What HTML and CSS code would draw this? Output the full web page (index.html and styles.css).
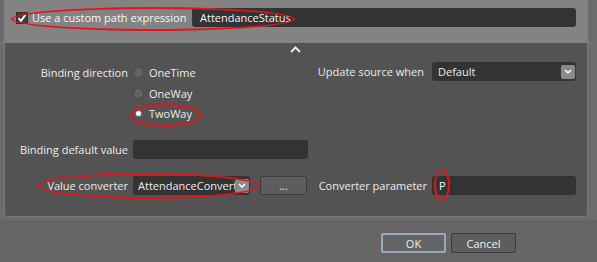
FILE: index.html
```html
<!DOCTYPE html>
<html lang="en">

<head>
    <meta charset="UTF-8">
    <link rel="stylesheet" href="styles.css">
    <title>Create Data Binding</title>
</head>

<body>
    <section class="dialog">
        <div class="frame">
            <div class="main">
                <!-- custom path row -->
                <div class="header">
                    <label class="check">
                        <span class="box">
                            <svg width="10" height="10" viewBox="0 0 10 10">
                                <path d="M1.5 5.2 L4 7.8 L8.6 1.6" fill="none" stroke="#fff" stroke-width="1.8"/>
                            </svg>
                        </span>
                        Use a custom path expression
                    </label>
                    <div class="field path">AttendanceStatus</div>
                </div>

                <div class="panel">
                    <div class="collapse">
                        <svg width="11" height="7" viewBox="0 0 11 7">
                            <path d="M1 6 L5.5 1.5 L10 6" fill="none" stroke="#e6e6e6" stroke-width="2"/>
                        </svg>
                    </div>

                    <div class="grid">
                        <div class="label top">Binding direction</div>
                        <div class="radios">
                            <div class="radio"><span class="dot"></span>OneTime</div>
                            <div class="radio"><span class="dot"></span>OneWay</div>
                            <div class="radio"><span class="dot on"></span>TwoWay</div>
                        </div>
                        <div class="label top first">Update source when</div>
                        <div class="select top">
                            <span class="value">Default</span>
                            <span class="arrow">
                                <svg width="8" height="5" viewBox="0 0 8 5"><path d="M1 1 L4 4 L7 1" fill="none" stroke="#fff" stroke-width="1.5"/></svg>
                            </span>
                        </div>

                        <div class="label">Binding default value</div>
                        <div class="field"></div>
                        <div></div>
                        <div></div>

                        <div class="label">Value converter</div>
                        <div class="pair">
                            <div class="select conv">
                                <span class="value">AttendanceConvert</span>
                                <span class="arrow">
                                    <svg width="8" height="5" viewBox="0 0 8 5"><path d="M1 1 L4 4 L7 1" fill="none" stroke="#fff" stroke-width="1.5"/></svg>
                                </span>
                            </div>
                            <div class="btn small">...</div>
                        </div>
                        <div class="label">Converter parameter</div>
                        <div class="field">P</div>
                    </div>
                </div>
            </div>
            <div class="side"></div>
        </div>

        <div class="footer">
            <div class="btn ok">OK</div>
            <div class="btn">Cancel</div>
        </div>

        <!-- red highlight marks -->
        <div class="mark m-path"></div>
        <div class="mark m-two"></div>
        <div class="mark m-conv"></div>
        <div class="mark m-param"></div>
    </section>
</body>

</html>
```

FILE: styles.css
```css
* {
    box-sizing: border-box;
    font-family: 'Open Sans', 'Liberation Sans', sans-serif;
}

body {
    margin: 0;
    background-color: #666666;
}

.dialog {
    position: relative;
    width: 597px;
    height: 262px;
    font-size: 11px;
    color: #ececec;
}

.frame {
    display: flex;
    height: 220px;
    background-color: #6c6c6c;
}

.main {
    width: 584px;
    margin-left: 4px;
    display: flex;
    flex-direction: column;
}

.side {
    flex: 1;
}

.header {
    height: 43px;
    background-color: #838383;
    display: flex;
    align-items: flex-start;
    padding: 8px 0 0 12px;
    color: #f8f8f8;
}

.check {
    display: flex;
    align-items: center;
    height: 19px;
    width: 176px;
    flex-shrink: 0;
    white-space: nowrap;
}

.box {
    width: 12px;
    height: 12px;
    background-color: #3c3c3c;
    border: 1px solid #2e2e2e;
    display: flex;
    justify-content: center;
    align-items: center;
    margin-right: 4px;
    flex-shrink: 0;
}

.field {
    height: 19px;
    background-color: #333333;
    border-radius: 3px;
    padding: 0 7px;
    line-height: 19px;
    color: #f2f2f2;
}

.path {
    width: 384px;
    padding-left: 8px;
}

.panel {
    flex: 1;
    background-color: #535353;
    border: 1px solid #7a7a7a;
    border-top: none;
    border-radius: 0 0 3px 3px;
    padding: 0 10px 19px 12px;
    margin-bottom: 3px;
}

.collapse {
    height: 19px;
    display: flex;
    justify-content: center;
    padding: 3px 0 0 0;
    margin-left: -4px;
}

.grid {
    display: grid;
    grid-template-columns: 116px 175px 124px 144px;
    grid-template-rows: 61px 19px 19px;
    row-gap: 17px;
    align-items: center;
}

.label {
    text-align: right;
    padding-right: 5px;
    white-space: nowrap;
}

.top {
    align-self: start;
}

.label.top {
    line-height: 20px;
    margin-top: 1px;
}

.label.first {
    margin-top: 0;
    padding-right: 8px;
}

.radios {
    display: flex;
    flex-direction: column;
    padding-top: 1px;
}

.radio {
    display: flex;
    align-items: center;
    height: 20.5px;
}

.dot {
    width: 11px;
    height: 11px;
    border-radius: 50%;
    background-color: #636363;
    border: 1px solid #4a4a4a;
    margin-right: 5px;
    display: flex;
    justify-content: center;
    align-items: center;
}

.dot.on::after {
    content: '';
    width: 5px;
    height: 5px;
    border-radius: 50%;
    background-color: #ffffff;
}

.select {
    height: 19px;
    background-color: #333333;
    border-radius: 3px;
    display: flex;
    align-items: center;
    padding: 0 1px 0 6px;
}

.select .value {
    flex: 1;
    overflow: hidden;
    white-space: nowrap;
}

.arrow {
    width: 14px;
    height: 14px;
    background-color: #8a8a8a;
    border-radius: 2px;
    display: flex;
    justify-content: center;
    align-items: center;
}

.pair {
    display: flex;
    gap: 10px;
}

.conv {
    width: 117px;
    padding-left: 5px;
}

.btn {
    height: 20px;
    width: 65px;
    background-color: #5d5d5d;
    border: 1px solid #3b3b3b;
    border-radius: 2px;
    display: flex;
    justify-content: center;
    align-items: center;
    color: #f0f0f0;
}

.btn.small {
    width: 47px;
    height: 19px;
}

.footer {
    display: flex;
    justify-content: flex-end;
    gap: 5px;
    padding: 13px 81px 0 0;
}

.ok {
    background-color: #646464;
    border: 2px solid #9aa8bd;
}

.mark {
    position: absolute;
    border: 2px solid #e3141c;
    border-radius: 50%;
}

.m-path {
    left: 11px;
    top: 7px;
    width: 284px;
    height: 24px;
}

.m-two {
    left: 130px;
    top: 104px;
    width: 72px;
    height: 23px;
}

.m-conv {
    left: 38px;
    top: 173px;
    width: 221px;
    height: 26px;
}

.m-param {
    left: 434px;
    top: 169px;
    width: 16px;
    height: 32px;
}
```
